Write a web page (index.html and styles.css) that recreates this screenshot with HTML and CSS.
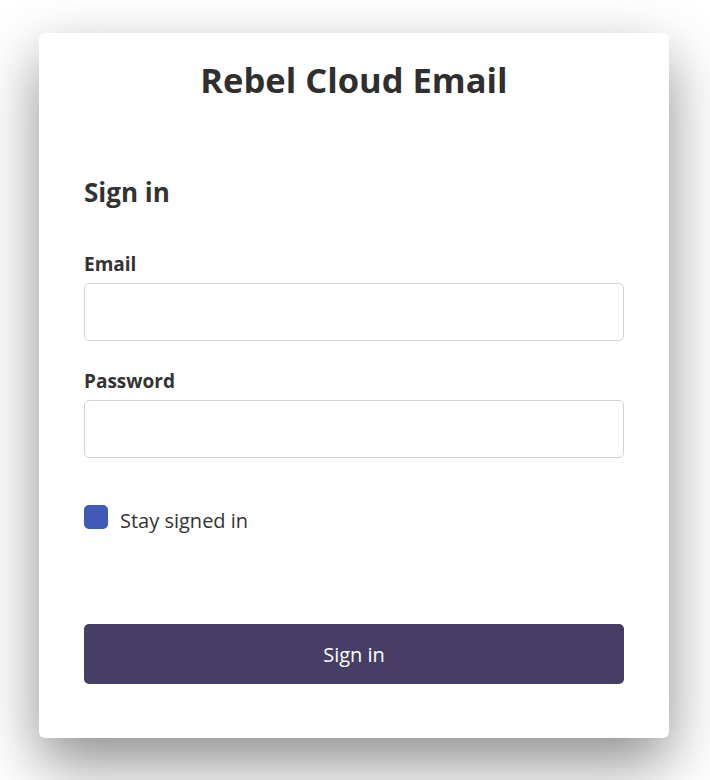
FILE: index.html
```html
<!DOCTYPE html>
<html lang="en">
<head>
<meta charset="utf-8">
<title>Rebel Cloud Email - Sign in</title>
<link rel="stylesheet" href="styles.css">
</head>
<body>
<main class="card">
  <h1 class="brand">Rebel Cloud Email</h1>
  <form class="form">
    <h2 class="form-title">Sign in</h2>
    <label class="label" for="email">Email</label>
    <input class="input" id="email" type="email">
    <label class="label label-pw" for="password">Password</label>
    <input class="input" id="password" type="password">
    <label class="check-row">
      <span class="checkbox"></span>
      <span class="check-text">Stay signed in</span>
    </label>
    <button class="btn" type="button">Sign in</button>
  </form>
</main>
</body>
</html>
```

FILE: styles.css
```css
html, body {
  margin: 0;
  padding: 0;
  background: #ffffff;
}
body {
  font-family: "Open Sans", "Noto Sans", sans-serif;
  color: #333333;
  padding-top: 33px;
  height: 780px;
  box-sizing: border-box;
  overflow: hidden;
}
.card {
  width: 630px;
  margin: 0 0 0 39px;
  background: #ffffff;
  border-radius: 6px;
  box-shadow: 0 25px 60px rgba(0, 0, 0, 0.45);
  padding: 25px 45px 55px;
  box-sizing: border-box;
  height: 705px;
}
.brand {
  margin: 0;
  text-align: center;
  font-size: 34.5px;
  line-height: 44px;
  font-weight: 700;
  color: #2f2f2f;
}
.form {
  display: flex;
  flex-direction: column;
}
.form-title {
  margin: 74px 0 0;
  font-size: 26px;
  line-height: 32px;
  font-weight: 700;
}
.label {
  margin-top: 44px;
  font-size: 19px;
  line-height: 24px;
  font-weight: 700;
}
.label-pw {
  margin-top: 28px;
}
.input {
  margin: 7px 0 0;
  height: 58px;
  box-sizing: border-box;
  border: 1px solid #d4d4d4;
  border-radius: 5px;
  background: #fff;
  font: inherit;
  padding: 0 12px;
}
.check-row {
  margin-top: 47px;
  display: flex;
  align-items: center;
  gap: 12px;
  height: 24px;
}
.checkbox {
  width: 24px;
  height: 24px;
  border-radius: 5px;
  background: #3f5bb7;
  flex: none;
}
.check-text {
  font-size: 20px;
  line-height: 24px;
  position: relative;
  top: 4px;
}
.btn {
  margin-top: 95px;
  height: 60px;
  border: none;
  border-radius: 5px;
  background: #463e64;
  color: #ffffff;
  font-family: inherit;
  font-size: 20px;
}
```
